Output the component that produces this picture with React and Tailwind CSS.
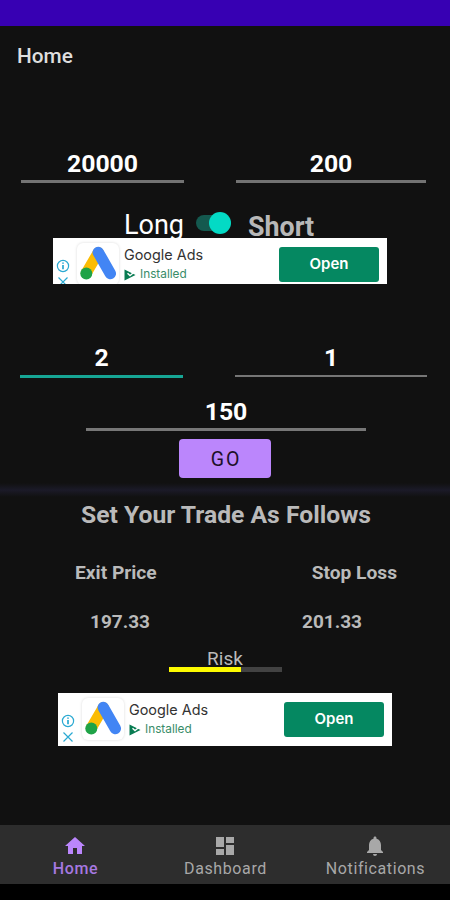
import React, { useState } from "react";
import clsx from "clsx";
import { MdHome, MdDashboard, MdNotifications } from "react-icons/md";

const TABS = [
  { label: "Home", Icon: MdHome },
  { label: "Dashboard", Icon: MdDashboard },
  { label: "Notifications", Icon: MdNotifications },
];

function NumberField({ initial, label, className }) {
  const [value, setValue] = useState(initial);

  return (
    <input
      aria-label={label}
      className={clsx(
        "block bg-transparent text-center text-[24.8px] font-bold text-white outline-none",
        className
      )}
      value={value}
      onChange={(e) => setValue(e.target.value)}
    />
  );
}

function AdsLogo() {
  return (
    <div className="flex size-[42px] shrink-0 items-center justify-center rounded-md bg-white shadow-[0_0_3px_rgba(0,0,0,0.15)]">
      <svg viewBox="0 0 42 42" className="size-[42px]" strokeLinecap="round">
        <path d="M21.3 9.5 L9.3 30" stroke="#fbbc04" strokeWidth="11" />
        <path d="M21.3 9.5 L33.3 30.5" stroke="#4285f4" strokeWidth="11.5" />
        <circle cx="9.3" cy="30.5" r="6" fill="#1fa347" />
      </svg>
    </div>
  );
}

function AdBanner({ className }) {
  return (
    <div
      className={clsx(
        "flex overflow-hidden bg-white font-[Inter,sans-serif]",
        className
      )}
    >
      <svg
        viewBox="0 0 14 32"
        className="mt-[21px] ml-[3px] h-8 w-3.5 shrink-0"
        fill="none"
        stroke="#2aa9d2"
        strokeWidth="1.2"
      >
        <circle cx="7" cy="7" r="5.6" />
        <path d="M7 6v4.2M7 3.4v1.4" strokeWidth="1.7" />
        <path d="M2.5 18.5l9 9M11.5 18.5l-9 9" />
      </svg>
      <div className="mt-[5px] ml-[7px]">
        <AdsLogo />
      </div>
      <div className="mt-[7px] ml-1 w-[150px]">
        <p className="pl-px text-[14.4px] leading-5 text-[#333]">Google Ads</p>
        <p className="mt-px flex h-[17px] items-center gap-1 pl-px text-[11.8px] text-[#388c68]">
          <svg viewBox="0 0 12 12" className="size-3">
            <path d="M0.5 0.5 L11.5 6 L0.5 11.5 Z" fill="#087c52" />
            <path
              d="M3.5 4.2 L6 6.5 L11.5 2"
              fill="none"
              stroke="#fff"
              strokeWidth="1.4"
            />
          </svg>
          Installed
        </p>
      </div>
      <button className="mt-[8.5px] mr-2 ml-auto h-[35.5px] w-[100px] rounded-[3px] bg-[#058861] text-[15px] font-semibold text-white">
        Open
      </button>
    </div>
  );
}

function RiskBar({ percent }) {
  return (
    <div className="h-[5px] w-[113px] bg-[#424242]">
      <div className="h-full bg-[#fdfb00]" style={{ width: `${percent}%` }} />
    </div>
  );
}

export default function App() {
  const [activeTab, setActiveTab] = useState("Home");

  return (
    <div className="flex h-[900px] w-[450px] flex-col overflow-hidden bg-[#111111] font-[Roboto,sans-serif] text-[#bababa]">
      <div className="h-[26px] shrink-0 bg-[#3700b3]" />
      <header className="flex h-[60px] shrink-0 items-center pt-0.5 pl-[17px]">
        <h1 className="text-[20.8px] font-medium text-[#dedede]">Home</h1>
      </header>

      <main className="flex flex-1 flex-col">
        <div className="mt-[58px] flex h-[39px] justify-between pr-6 pl-[21px]">
          <NumberField
            initial="20000"
            label="Account size"
            className="h-[39px] w-[163px] border-b-3 border-[#737373] pt-0.5"
          />
          <NumberField
            initial="200"
            label="Entry price"
            className="h-[39px] w-[190px] border-b-3 border-[#737373] pt-0.5"
          />
        </div>

        <div className="mt-[25px] flex h-[30px] items-start pl-[124px]">
          <span className="w-[60px] text-[27px] leading-[34px] whitespace-nowrap text-white">
            Long
          </span>
          <button
            aria-label="Long or short"
            className="mt-1 ml-3 flex h-[21px] w-[35px] items-center justify-end"
          >
            <span className="h-4 w-[24px] rounded-l-full bg-[#14594f]" />
            <span className="-ml-[11px] size-[22px] shrink-0 rounded-full bg-[#03dac5]" />
          </button>
          <span className="ml-[17px] text-[26.8px] leading-[39px] font-bold text-[#b8b8b8]">
            Short
          </span>
        </div>

        <AdBanner className="ml-[53px] h-[46px] w-[334px]" />

        <div className="mt-[53px] flex h-[41px] items-start justify-between pr-[23px] pl-5">
          <NumberField
            initial="2"
            label="Reward"
            className="h-[41px] w-[163px] border-b-3 border-[#16a695] pt-0.5"
          />
          <NumberField
            initial="1"
            label="Risk"
            className="h-[40px] w-[192px] border-b-2 border-[#767676] pt-0.5"
          />
        </div>
        <div className="mt-[17px] flex justify-center pl-0.5">
          <NumberField
            initial="150"
            label="Daily range"
            className="h-[36px] w-[280px] border-b-3 border-[#777]"
          />
        </div>

        <button className="mt-2 ml-[179px] h-[39px] w-[92px] rounded-[4px] bg-[#bb86fc] pt-[3px] pl-0.5 text-[19.5px] tracking-[1.8px] text-[#1d1029]">
          GO
        </button>
        <div className="mt-[5px] h-[14px] bg-linear-to-b from-[#111111] via-[#1b1a28] to-[#111111]" />

        <h2 className="mt-px h-[34px] pl-0.5 text-center text-[24.7px] leading-[33px] font-bold">
          Set Your Trade As Follows
        </h2>
        <div className="mt-[29px] flex justify-between pr-[53px] pl-[75px] text-[19.2px] leading-6 font-bold">
          <span>Exit Price</span>
          <span>Stop Loss</span>
        </div>
        <div className="mt-[25px] flex justify-between pr-[88px] pl-[90px] text-[19px] leading-6 font-bold">
          <span>197.33</span>
          <span>201.33</span>
        </div>
        <div className="mt-[13px] flex flex-col items-center">
          <span className="h-[20px] text-[19px] leading-[23px]">Risk</span>
          <RiskBar percent={64} />
        </div>

        <AdBanner className="mt-[21px] ml-[58px] h-[53px] w-[334px]" />
      </main>

      <nav className="flex h-[59px] shrink-0 bg-[#2d2d2d]">
        {TABS.map(({ label, Icon }) => (
          <button
            key={label}
            onClick={() => setActiveTab(label)}
            className={clsx(
              "flex w-[150px] flex-col items-center pt-[9px] text-[16px] leading-[22px] tracking-[0.6px]",
              activeTab === label
                ? "font-medium text-[#a678e0]"
                : "text-[#a8a8a8]"
            )}
          >
            <Icon
              className={clsx(
                "size-6 shrink-0",
                activeTab === label && "text-[#bb86fc]"
              )}
            />
            <span className="pl-px">{label}</span>
          </button>
        ))}
      </nav>
      <div className="h-4 shrink-0 bg-black" />
    </div>
  );
}
